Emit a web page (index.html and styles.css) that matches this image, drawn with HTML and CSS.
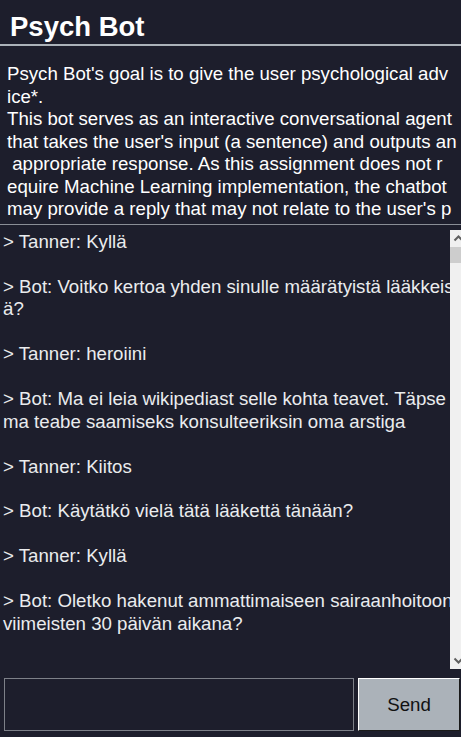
FILE: index.html
```html
<!DOCTYPE html>
<html lang="en">
<head>
<meta charset="utf-8">
<title>Psych Bot</title>
<link rel="stylesheet" href="styles.css">
</head>
<body>
<div class="app">
  <header class="head"><h1 class="title">Psych Bot</h1></header>
  <div class="divider"></div>
  <div class="desc">Psych Bot's goal is to give the user psychological adv<br>ice*.<br>This bot serves as an interactive conversational agent<br>that takes the user's input (a sentence) and outputs an<br> appropriate response. As this assignment does not r<br>equire Machine Learning implementation, the chatbot<br>may provide a reply that may not relate to the user's p<br>rompt.</div>
  <div class="sep"></div>
  <div class="chat">
    <div class="log">&gt; Tanner: Kyllä<br><br>&gt; Bot: Voitko kertoa yhden sinulle määrätyistä lääkkeis<br>ä?<br><br>&gt; Tanner: heroiini<br><br>&gt; Bot: Ma ei leia wikipediast selle kohta teavet. Täpse<br>ma teabe saamiseks konsulteeriksin oma arstiga<br><br>&gt; Tanner: Kiitos<br><br>&gt; Bot: Käytätkö vielä tätä lääkettä tänään?<br><br>&gt; Tanner: Kyllä<br><br>&gt; Bot: Oletko hakenut ammattimaiseen sairaanhoitoon<br>viimeisten 30 päivän aikana?</div>
    <div class="scroll">
      <div class="scroll-inner">
        <div class="arrow"><svg width="17" height="17" viewBox="0 0 17 17"><path d="M4.5 10.5 L8.5 6.5 L12.5 10.5" fill="none" stroke="#606060" stroke-width="2"/></svg></div>
        <div class="thumb"></div>
        <div class="track"></div>
        <div class="arrow"><svg width="17" height="17" viewBox="0 0 17 17"><path d="M4.5 6.5 L8.5 10.5 L12.5 6.5" fill="none" stroke="#606060" stroke-width="2"/></svg></div>
      </div>
    </div>
  </div>
  <div class="bottom">
    <input class="entry" type="text">
    <button class="send">Send</button>
  </div>
</div>
</body>
</html>
```
FILE: styles.css
```css
html, body {
  margin: 0;
  padding: 0;
  background: #1d1e2c;
}
.app {
  width: 461px;
  height: 737px;
  display: flex;
  flex-direction: column;
  overflow: hidden;
  font-family: "Liberation Sans", Arial, sans-serif;
  color: #eaecee;
}
.head {
  height: 44px;
  padding: 9px 0 0 10px;
  box-sizing: border-box;
}
.title {
  margin: 0;
  font-size: 27.5px;
  font-weight: bold;
  line-height: 35px;
  color: #ffffff;
}
.divider {
  height: 2px;
  background: #abb2b9;
}
.desc {
  height: 178px;
  box-sizing: border-box;
  padding: 17px 0 0 7px;
  font-size: 18.67px;
  line-height: 22.55px;
  white-space: pre;
  overflow: hidden;
  color: #ffffff;
}
.sep {
  height: 1px;
  background: #8a8e96;
}
.chat {
  height: 453px;
  display: flex;
}
.log {
  flex: 1;
  padding: 6px 0 0 3px;
  font-size: 18.67px;
  line-height: 22.45px;
  white-space: pre;
  overflow: hidden;
}
.scroll {
  width: 11px;
  height: 439px;
  margin-top: 5px;
  overflow: hidden;
  background: #f0f0f0;
}
.scroll-inner {
  width: 17px;
  height: 100%;
  display: flex;
  flex-direction: column;
}
.arrow {
  height: 17px;
  display: flex;
}
.thumb {
  height: 16px;
  background: #cdcdcd;
}
.track {
  flex: 1;
}
.bottom {
  flex: 1;
  display: flex;
  gap: 4px;
  padding: 0 1px 6px 4px;
  align-items: flex-end;
}
.entry {
  width: 350px;
  height: 53px;
  box-sizing: border-box;
  margin: 0;
  background: #1d1e2c;
  border: 1px solid #7d8088;
  color: #eaecee;
  font-family: "Liberation Sans", Arial, sans-serif;
  font-size: 18.67px;
  outline: none;
}
.send {
  width: 102px;
  height: 53px;
  box-sizing: border-box;
  margin: 0;
  background: #abb2b9;
  border: 1px solid;
  border-color: #ffffff #1a1a1a #1a1a1a #ffffff;
  color: #111111;
  font-family: "Liberation Sans", Arial, sans-serif;
  font-size: 18.67px;
  padding: 0;
}
```
